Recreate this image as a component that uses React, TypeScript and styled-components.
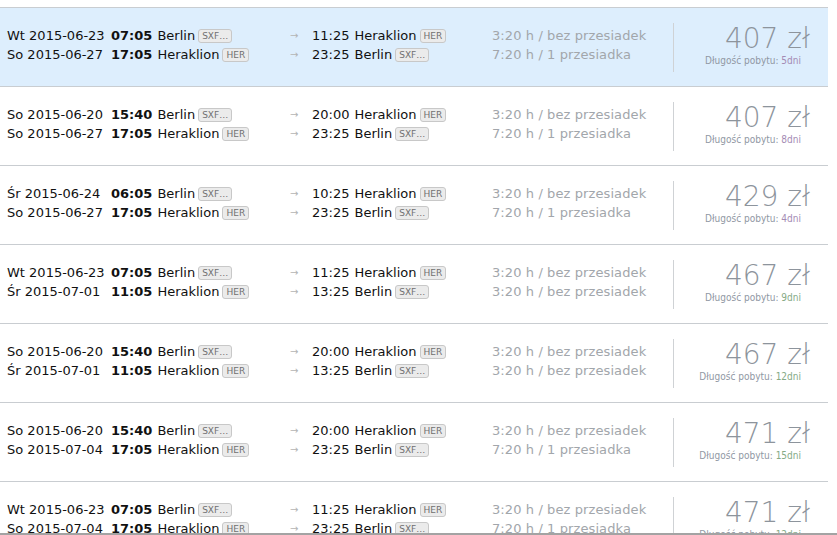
import React from "react";
import styled, { createGlobalStyle } from "styled-components";

type Leg = {
  day: string;
  date: string;
  dep: string;
  from: string;
  fromCode: string;
  arr: string;
  to: string;
  toCode: string;
  duration: string;
};

type Offer = {
  out: Leg;
  back: Leg;
  price: number;
  days: number;
  active?: boolean;
};

const toHer = (day: string, date: string, dep: string, arr: string, duration: string): Leg => ({
  day,
  date,
  dep,
  from: "Berlin",
  fromCode: "SXF…",
  arr,
  to: "Heraklion",
  toCode: "HER",
  duration,
});

const toBer = (day: string, date: string, dep: string, arr: string, duration: string): Leg => ({
  day,
  date,
  dep,
  from: "Heraklion",
  fromCode: "HER",
  arr,
  to: "Berlin",
  toCode: "SXF…",
  duration,
});

const DIRECT = "3:20 h / bez przesiadek";
const ONE_STOP = "7:20 h / 1 przesiadka";

const offers: Offer[] = [
  {
    out: toHer("Wt", "2015-06-23", "07:05", "11:25", DIRECT),
    back: toBer("So", "2015-06-27", "17:05", "23:25", ONE_STOP),
    price: 407,
    days: 5,
    active: true,
  },
  {
    out: toHer("So", "2015-06-20", "15:40", "20:00", DIRECT),
    back: toBer("So", "2015-06-27", "17:05", "23:25", ONE_STOP),
    price: 407,
    days: 8,
  },
  {
    out: toHer("Śr", "2015-06-24", "06:05", "10:25", DIRECT),
    back: toBer("So", "2015-06-27", "17:05", "23:25", ONE_STOP),
    price: 429,
    days: 4,
  },
  {
    out: toHer("Wt", "2015-06-23", "07:05", "11:25", DIRECT),
    back: toBer("Śr", "2015-07-01", "11:05", "13:25", DIRECT),
    price: 467,
    days: 9,
  },
  {
    out: toHer("So", "2015-06-20", "15:40", "20:00", DIRECT),
    back: toBer("Śr", "2015-07-01", "11:05", "13:25", DIRECT),
    price: 467,
    days: 12,
  },
  {
    out: toHer("So", "2015-06-20", "15:40", "20:00", DIRECT),
    back: toBer("So", "2015-07-04", "17:05", "23:25", ONE_STOP),
    price: 471,
    days: 15,
  },
  {
    out: toHer("Wt", "2015-06-23", "07:05", "11:25", DIRECT),
    back: toBer("So", "2015-07-04", "17:05", "23:25", ONE_STOP),
    price: 471,
    days: 12,
  },
];

const GlobalStyle = createGlobalStyle`
  html, body {
    margin: 0;
    padding: 0;
    background: #fff;
  }
  body {
    font-family: "DejaVu Sans", Verdana, sans-serif;
    font-size: 13px;
    color: #111;
  }
`;

const Page = styled.div`
  height: 535px;
  box-sizing: border-box;
  padding-top: 7px;
  overflow: hidden;
  border-bottom: 2px solid #a3a3a3;
`;

const List = styled.div`
  width: 828px;
`;

const Row = styled.div<{ $active?: boolean }>`
  display: flex;
  height: 60px;
  padding-top: 18px;
  border-top: 1px solid #c9cdd1;
  background: ${(p) => (p.$active ? "#ddeefd" : "#fff")};
`;

const Legs = styled.div`
  display: flex;
  flex-direction: column;
`;

const LegLine = styled.div`
  display: flex;
  align-items: center;
  height: 19px;
  line-height: 19px;
  white-space: nowrap;
`;

const Depart = styled.div`
  width: 283px;
  padding-left: 7px;
  display: flex;
  align-items: center;
`;

const DateText = styled.span`
  width: 104px;
`;

const Time = styled.span<{ $bold?: boolean }>`
  font-weight: ${(p) => (p.$bold ? "bold" : "normal")};
  margin-right: 5px;
`;

const Code = styled.span`
  display: inline-block;
  margin-left: 3px;
  height: 12px;
  line-height: 12px;
  padding: 0 3px;
  border: 1px solid #c8c8c8;
  border-radius: 3px;
  background: #ebebeb;
  color: #707070;
  font-size: 9px;
`;

const Arrive = styled.div`
  width: 202px;
  display: flex;
  align-items: center;
`;

const Arrow = styled.span`
  width: 22px;
  color: #b4b4b4;
  font-size: 10px;
`;

const Duration = styled.div`
  width: 181px;
  color: #a2a6ab;
  line-height: 19px;
  white-space: nowrap;
  letter-spacing: 0.1px;
`;

const Divider = styled.div`
  width: 1px;
  height: 49px;
  margin-top: -3px;
  background: #cfd2d5;
`;

const PriceBox = styled.div`
  flex: 1;
  display: flex;
  flex-direction: column;
  align-items: flex-end;
  padding-right: 18px;
`;

const Price = styled.div`
  font-size: 28px;
  font-weight: 200;
  line-height: 28px;
  margin-top: -1px;
  color: #8d949c;
`;

const Stay = styled.div`
  margin-top: 2px;
  margin-right: 9px;
  font-family: "DejaVu Sans Condensed", "DejaVu Sans", sans-serif;
  font-size: 10px;
  color: #9097a3;
`;

const StayDays = styled.span<{ $long?: boolean }>`
  color: ${(p) => (p.$long ? "#86aa86" : "#a48bb4")};
`;

const LegRow: React.FC<{ leg: Leg }> = ({ leg }) => (
  <LegLine>
    <Depart>
      <DateText>
        {leg.day} {leg.date}
      </DateText>
      <Time $bold>{leg.dep}</Time>
      {leg.from}
      <Code>{leg.fromCode}</Code>
    </Depart>
    <Arrive>
      <Arrow>→</Arrow>
      <Time>{leg.arr}</Time>
      {leg.to}
      <Code>{leg.toCode}</Code>
    </Arrive>
    <Duration>{leg.duration}</Duration>
  </LegLine>
);

const App: React.FC = () => (
  <Page>
    <GlobalStyle />
    <List>
      {offers.map((o, i) => (
        <Row key={i} $active={o.active}>
          <Legs>
            <LegRow leg={o.out} />
            <LegRow leg={o.back} />
          </Legs>
          <Divider />
          <PriceBox>
            <Price>{o.price} zł</Price>
            <Stay>
              Długość pobytu: <StayDays $long={o.days >= 9}>{o.days}dni</StayDays>
            </Stay>
          </PriceBox>
        </Row>
      ))}
    </List>
  </Page>
);

export default App;
